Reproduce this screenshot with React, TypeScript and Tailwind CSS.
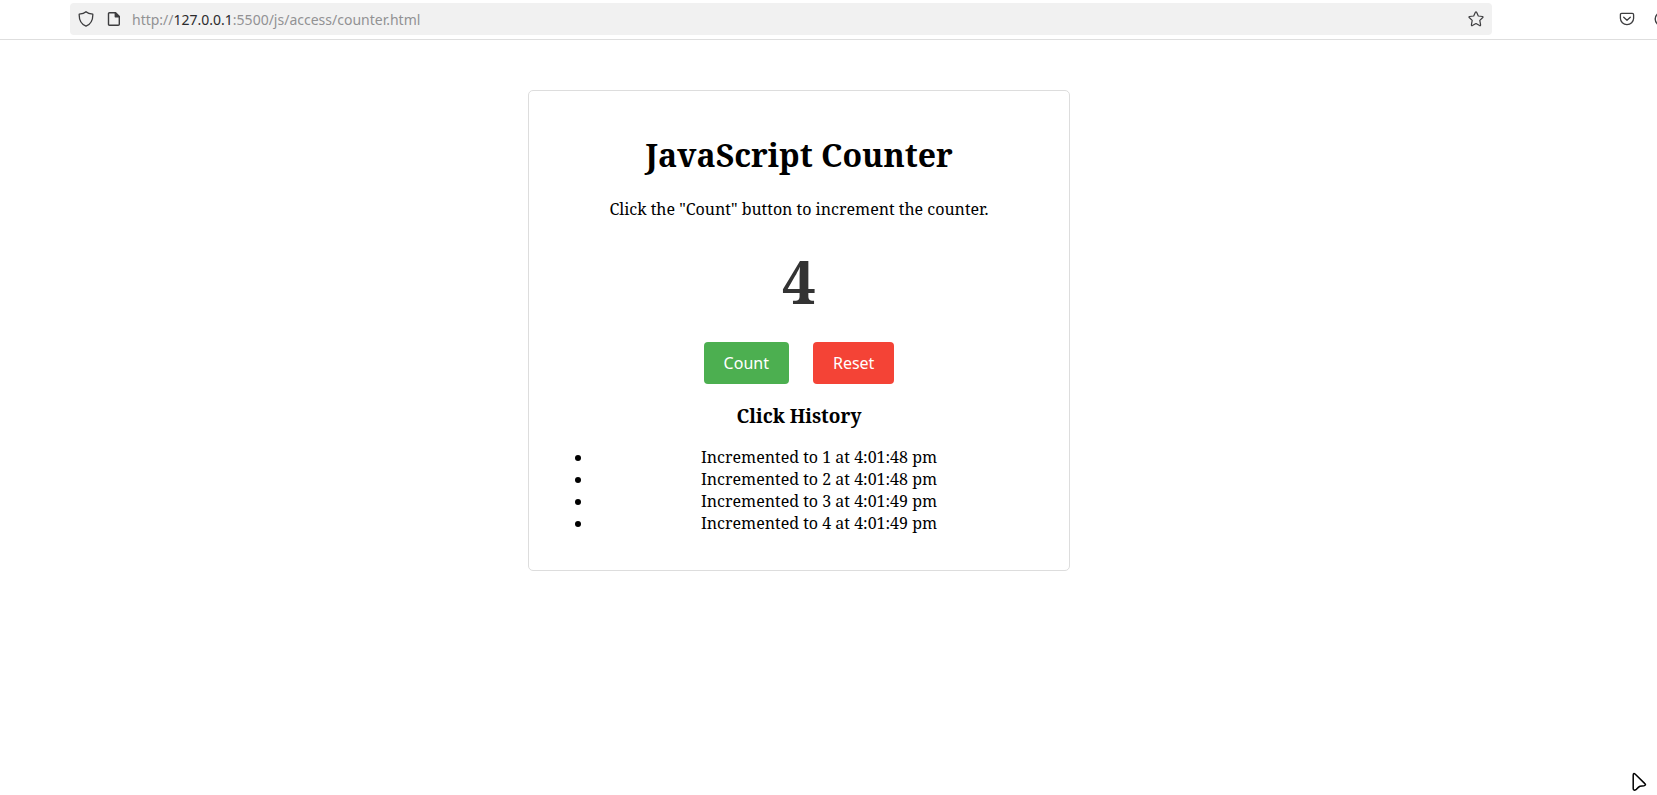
import { useState } from "react";

const initialHistory = [
  "Incremented to 1 at 4:01:48 pm",
  "Incremented to 2 at 4:01:48 pm",
  "Incremented to 3 at 4:01:49 pm",
  "Incremented to 4 at 4:01:49 pm",
];

function ShieldIcon() {
  return (
    <svg className="size-4" viewBox="0 0 16 16" fill="none" stroke="currentColor" strokeWidth="1.3" strokeLinejoin="round" aria-hidden="true">
      <path d="M8 .8C6.300 2.300 3.800 2.900 1.200 3.200C1 8.600 2.600 13 8 15.200C13.400 13 15 8.600 14.800 3.200C12.200 2.900 9.700 2.300 8 .8Z" />
    </svg>
  );
}

function PageIcon() {
  return (
    <svg className="size-4" viewBox="0 0 16 16" fill="none" stroke="currentColor" strokeWidth="1.4" strokeLinejoin="round" aria-hidden="true">
      <path d="M3.500 1.700H9.500L13.300 5.500V13.200Q13.300 14.300 12.200 14.300H3.600Q2.500 14.300 2.500 13.200V2.700Q2.500 1.700 3.500 1.700Z" />
      <path d="M9.300 1.700V5.700H13.300Z" fill="currentColor" />
    </svg>
  );
}

function StarIcon() {
  return (
    <svg className="size-4" viewBox="0 0 16 16" fill="none" stroke="currentColor" strokeWidth="1.200" strokeLinejoin="round" aria-hidden="true">
      <path d="M7.400 1.300Q8 .3 8.600 1.300L10.300 5L14.400 5.500Q15.500 5.700 14.800 6.500L11.800 9.400L12.600 13.900Q12.700 15.100 11.600 14.600L8 12.600L4.400 14.600Q3.300 15.100 3.400 13.900L4.200 9.400L1.200 6.500Q.5 5.700 1.600 5.500L5.700 5Z" />
    </svg>
  );
}

function PocketIcon() {
  return (
    <svg className="size-4" viewBox="0 0 16 16" fill="none" stroke="currentColor" strokeWidth="1.300" strokeLinecap="round" strokeLinejoin="round" aria-hidden="true">
      <path d="M2.700 2.400H13.300Q14.600 2.400 14.600 3.700V7.300A6.600 6.400 0 0 1 1.400 7.300V3.700Q1.400 2.400 2.700 2.400Z" />
      <path d="M4.700 6.300L8 9.300L11.300 6.300" />
    </svg>
  );
}

function AccountIcon() {
  return (
    <svg className="size-4" viewBox="0 0 16 16" fill="none" stroke="currentColor" strokeWidth="1.400" aria-hidden="true">
      <circle cx="8" cy="8" r="6.800" />
      <circle cx="8" cy="6" r="2" />
      <path d="M4 12Q8 8 12 12" />
    </svg>
  );
}

function Pointer() {
  return (
    <svg className="pointer-events-none absolute right-2.5 bottom-[3px] h-5 w-4" viewBox="0 0 16 20" fill="white" stroke="black" strokeWidth="1.500" strokeLinejoin="round" aria-hidden="true">
      <path d="M2.200 3.400Q2.200 .4 4.300 2.300L13.600 11.400Q15.700 13.300 13 13.700L9 14.200Q7.700 14.600 5.400 17.300Q2.200 19.300 2.200 16.500Z" />
    </svg>
  );
}

function AddressBar() {
  return (
    <header className="flex h-10 shrink-0 items-center overflow-hidden border-b border-[#dedede] bg-white pb-px text-[#3d3d3f]">
      <div className="ml-[70px] mr-[127px] flex h-8 min-w-0 flex-1 items-center rounded bg-[#f1f1f1] px-2">
        <button type="button" aria-label="Tracking protection"><ShieldIcon /></button>
        <button type="button" aria-label="Site information" className="ml-3"><PageIcon /></button>
        <a href="http://127.0.0.1:5500/js/access/counter.html" className="ml-2.5 flex-1 truncate pt-0.5 text-sm text-[#929294]">
          http://<span className="text-[#2b2b2d]">127.0.0.1</span>:5500/js/access/counter.html
        </a>
        <button type="button" aria-label="Bookmark this page"><StarIcon /></button>
      </div>
      <div className="-mr-[13px] flex shrink-0 gap-[19px]">
        <button type="button" aria-label="Save to Pocket"><PocketIcon /></button>
        <button type="button" aria-label="Account"><AccountIcon /></button>
      </div>
    </header>
  );
}

export default function App() {
  const [count, setCount] = useState(4);
  const [history, setHistory] = useState(initialHistory);

  const increment = () => {
    const next = count + 1;
    const time = new Date().toLocaleTimeString("en-US").toLowerCase();
    setCount(next);
    setHistory([...history, `Incremented to ${next} at ${time}`]);
  };

  const reset = () => {
    setCount(0);
    setHistory([]);
  };

  return (
    <div className="relative flex min-h-screen flex-col bg-white font-['Noto_Sans',sans-serif]">
      <AddressBar />
      <main className="flex justify-center pt-[50px] pr-[59px] font-['Noto_Serif','DejaVu_Serif',serif] text-black">
        <section className="w-full max-w-[542px] rounded-[5px] border border-[#dddddd] p-5 text-center">
          <h1 className="mt-[22px] text-[32px] leading-11 font-bold">JavaScript Counter</h1>
          <p className="mt-[21px] text-base leading-[22px]">Click the "Count" button to increment the counter.</p>
          <div className="my-5 text-[60px] leading-[82px] font-bold text-[#333333]">{count}</div>
          <div className="flex justify-center gap-6 font-['Noto_Sans',sans-serif] text-base leading-[22px] text-white">
            <button type="button" onClick={increment} className="rounded bg-[#4caf50] px-5 py-2.5">Count</button>
            <button type="button" onClick={reset} className="rounded bg-[#f44336] px-5 py-2.5">Reset</button>
          </div>
          <h3 className="mt-[19px] text-[19px] leading-[26px] font-bold">Click History</h3>
          <ul className="mt-[17px] mb-4 pl-10 text-base leading-[22px]">
            {history.map((entry, i) => (
              <li
                key={i}
                className="flex items-center before:mt-0.5 before:mr-2 before:-ml-3.5 before:size-1.5 before:shrink-0 before:rounded-full before:bg-black"
              >
                <span className="flex-1">{entry}</span>
              </li>
            ))}
          </ul>
        </section>
      </main>
      <Pointer />
    </div>
  );
}
